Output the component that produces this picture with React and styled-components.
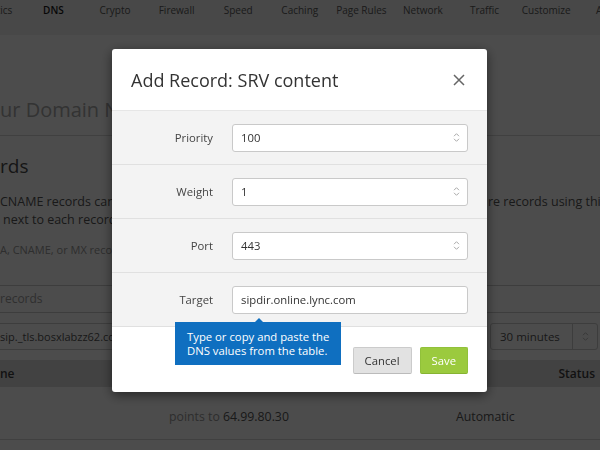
import React from 'react';
import styled, { createGlobalStyle } from 'styled-components';

// Global reset
const GlobalStyle = createGlobalStyle`
  html, body {
    margin: 0;
    padding: 0;
    width: 600px;
    height: 450px;
    overflow: hidden;
    background: #fff;
  }
  body {
    font-family: "Open Sans", "Noto Sans", sans-serif;
  }
  * {
    box-sizing: border-box;
  }
`;

// Page behind the dialog
const Page = styled.div`
  width: 600px;
  height: 450px;
  overflow: hidden;
  background: #fff;
  color: #555;
`;

const NavBar = styled.nav`
  height: 35px;
  background: #f0f0f0;
  overflow: hidden;
`;

const NavList = styled.ul`
  display: flex;
  list-style: none;
  margin: 0 0 0 -39px;
  padding: 3px 0 0;
`;

const NavItem = styled.li`
  flex: 0 0 61.6px;
  display: flex;
  justify-content: center;
  white-space: nowrap;
  font-size: 10px;
  line-height: 14px;
  color: ${(p) => (p.$active ? '#1a1a1a' : '#5a5a5a')};
  font-weight: ${(p) => (p.$active ? 600 : 400)};
`;

const TitleBar = styled.h1`
  margin: 0;
  padding: 60px 0 10px;
  font-size: 20px;
  line-height: 30px;
  font-weight: 400;
  color: #aaa;
  white-space: nowrap;
  border-bottom: 1px solid #d8d8d8;
`;

const SectionHeading = styled.h2`
  margin: 16px 0 0;
  font-size: 19px;
  line-height: 28px;
  font-weight: 400;
  color: #4a4a4a;
`;

const Paragraph = styled.div`
  margin-top: 13px;
  font-size: 12.5px;
  line-height: 18.3px;
  color: #555;
`;

const ParaLine = styled.div`
  display: flex;
  justify-content: space-between;
  white-space: nowrap;
  padding-left: ${(p) => p.$indent || 0}px;
`;

const ParaTail = styled.span`
  flex: 0 0 112px;
  overflow: hidden;
`;

const Hint = styled.p`
  margin: 12px 0 0;
  font-size: 11px;
  line-height: 16px;
  color: #999;
  white-space: nowrap;
`;

const SearchBox = styled.div`
  margin: 27px -1px 0;
  height: 28px;
  border: 1px solid #ccc;
  display: flex;
  align-items: center;
  font-size: 12px;
  color: #9e9e9e;
`;

const RecordRow = styled.div`
  display: flex;
  gap: 10px;
  margin-top: 10px;
  height: 27px;
  padding-right: 2px;
`;

const NameBox = styled.div`
  flex: 1;
  margin-left: -1px;
  border: 1px solid #ccc;
  display: flex;
  align-items: center;
  font-size: 11px;
  color: #555;
  white-space: nowrap;
  overflow: hidden;
`;

const TtlSelect = styled.div`
  flex: 0 0 108px;
  display: flex;
  border: 1px solid #ccc;
  border-radius: 3px;
  font-size: 11.5px;
  color: #555;
`;

const TtlValue = styled.span`
  flex: 1;
  display: flex;
  align-items: center;
  padding-left: 9px;
`;

const TtlArrows = styled.span`
  flex: 0 0 25px;
  display: flex;
  align-items: center;
  justify-content: center;
  border-left: 1px solid #ccc;
`;

const TableHead = styled.div`
  margin-top: 10px;
  height: 27px;
  display: flex;
  align-items: center;
  justify-content: space-between;
  padding-right: 5px;
  background: #dcdcdc;
  font-size: 12px;
  font-weight: 600;
  color: #3c3c3c;
`;

const TableRow = styled.div`
  height: 53px;
  display: grid;
  grid-template-columns: 169px 287px 1fr;
  align-items: center;
  padding-top: 7px;
  border-bottom: 1px solid #d8d8d8;
  font-size: 12.3px;
  color: #555;
  white-space: nowrap;
`;

const Muted = styled.span`
  color: #999;
`;

// Dialog
const Backdrop = styled.div`
  position: fixed;
  inset: 0;
  background: rgba(0, 0, 0, 0.7);
`;

const Modal = styled.div`
  position: fixed;
  top: 49px;
  left: calc(50% - 188px);
  width: 375px;
  background: #fff;
  border-radius: 3px;
  box-shadow: 0 3px 12px rgba(0, 0, 0, 0.5);
  font-size: 11.3px;
  color: #333;
`;

const ModalHeader = styled.div`
  height: 62px;
  display: flex;
  align-items: center;
  justify-content: space-between;
  padding: 0 22px 0 19px;
  border-bottom: 1px solid #e6e6e6;
`;

const ModalTitle = styled.h2`
  margin: 0;
  font-size: 18px;
  font-weight: 400;
  color: #333;
`;

const CloseButton = styled.button`
  width: 12px;
  height: 12px;
  padding: 0;
  border: 0;
  background: none;
  display: flex;
`;

const FieldRow = styled.div`
  display: grid;
  grid-template-columns: 101px 236px;
  column-gap: 19px;
  align-items: center;
  height: 54px;
  background: #f3f3f3;
  border-bottom: 1px solid #e0e0e0;
`;

const FieldLabel = styled.label`
  text-align: right;
  color: #444;
`;

const FieldBox = styled.div`
  height: 28px;
  display: flex;
  align-items: center;
  justify-content: space-between;
  padding: 0 7px 0 8px;
  background: #fff;
  border: 1px solid #c9c9c9;
  border-radius: 3px;
  color: #333;
  white-space: nowrap;
`;

const ModalFooter = styled.div`
  position: relative;
  display: flex;
  justify-content: flex-end;
  gap: 8px;
  padding: 20px 19px 18px;
`;

const Button = styled.button`
  height: 27px;
  padding: 0 11px;
  font-family: inherit;
  font-size: 11.3px;
  border-radius: 2px;
  border: 1px solid ${(p) => (p.$primary ? '#91c13a' : '#cbcbcb')};
  border-bottom-color: ${(p) => (p.$primary ? '#86b332' : '#bbb')};
  background: ${(p) => (p.$primary ? '#9bca3e' : '#e2e2e2')};
  color: ${(p) => (p.$primary ? '#fff' : '#333')};
`;

const Tooltip = styled.div`
  position: absolute;
  left: 63px;
  top: -5px;
  width: 166px;
  padding: 8px 12px;
  background: #0f6fc0;
  color: #fff;
  font-size: 11.3px;
  line-height: 13.5px;
  white-space: nowrap;

  &::before {
    content: '';
    position: absolute;
    left: 80px;
    top: -4px;
    border-left: 4px solid transparent;
    border-right: 4px solid transparent;
    border-bottom: 4px solid #0f6fc0;
  }
`;

const Arrows = ({ color = '#aaa' }) => (
  <svg width="7" height="11" viewBox="0 0 7 11">
    <path d="M1 4.2 L3.5 1.7 L6 4.2 M1 6.8 L3.5 9.3 L6 6.8" fill="none" stroke={color} strokeWidth="1" />
  </svg>
);

const navItems = ['Analytics', 'DNS', 'Crypto', 'Firewall', 'Speed', 'Caching', 'Page Rules', 'Network', 'Traffic', 'Customize', 'Apps'];

const fields = [
  { label: 'Priority', value: '100', spin: true },
  { label: 'Weight', value: '1', spin: true },
  { label: 'Port', value: '443', spin: true },
  { label: 'Target', value: 'sipdir.online.lync.com', spin: false },
];

const App = () => {
  return (
    <>
      <GlobalStyle />
      <Page>
        <NavBar>
          <NavList>
            {navItems.map((item) => (
              <NavItem key={item} $active={item === 'DNS'}>
                {item}
              </NavItem>
            ))}
          </NavList>
        </NavBar>

        <TitleBar>ur Domain Names</TitleBar>
        <SectionHeading>rds</SectionHeading>
        <Paragraph>
          <ParaLine>
            <span>CNAME records can be added here</span>
            <ParaTail>re records using this</ParaTail>
          </ParaLine>
          <ParaLine $indent={3}>next to each record</ParaLine>
        </Paragraph>
        <Hint>A, CNAME, or MX records</Hint>
        <SearchBox>records</SearchBox>
        <RecordRow>
          <NameBox>sip._tls.bosxlabzz62.com</NameBox>
          <TtlSelect>
            <TtlValue>30 minutes</TtlValue>
            <TtlArrows>
              <Arrows color="#bbb" />
            </TtlArrows>
          </TtlSelect>
        </RecordRow>
        <TableHead>
          <span>ne</span>
          <span>Status</span>
        </TableHead>
        <TableRow>
          <span />
          <span>
            <Muted>points to</Muted> 64.99.80.30
          </span>
          <span>Automatic</span>
        </TableRow>
      </Page>

      <Backdrop />

      <Modal>
        <ModalHeader>
          <ModalTitle>Add Record: SRV content</ModalTitle>
          <CloseButton aria-label="Close">
            <svg width="12" height="12" viewBox="0 0 12 12">
              <path d="M1 1 L11 11 M11 1 L1 11" stroke="#666" strokeWidth="1.5" fill="none" />
            </svg>
          </CloseButton>
        </ModalHeader>

        {fields.map((f) => (
          <FieldRow key={f.label}>
            <FieldLabel>{f.label}</FieldLabel>
            <FieldBox>
              <span>{f.value}</span>
              {f.spin && <Arrows />}
            </FieldBox>
          </FieldRow>
        ))}

        <ModalFooter>
          <Tooltip>
            Type or copy and paste the
            <br />
            DNS values from the table.
          </Tooltip>
          <Button>Cancel</Button>
          <Button $primary>Save</Button>
        </ModalFooter>
      </Modal>
    </>
  );
};

export default App;
